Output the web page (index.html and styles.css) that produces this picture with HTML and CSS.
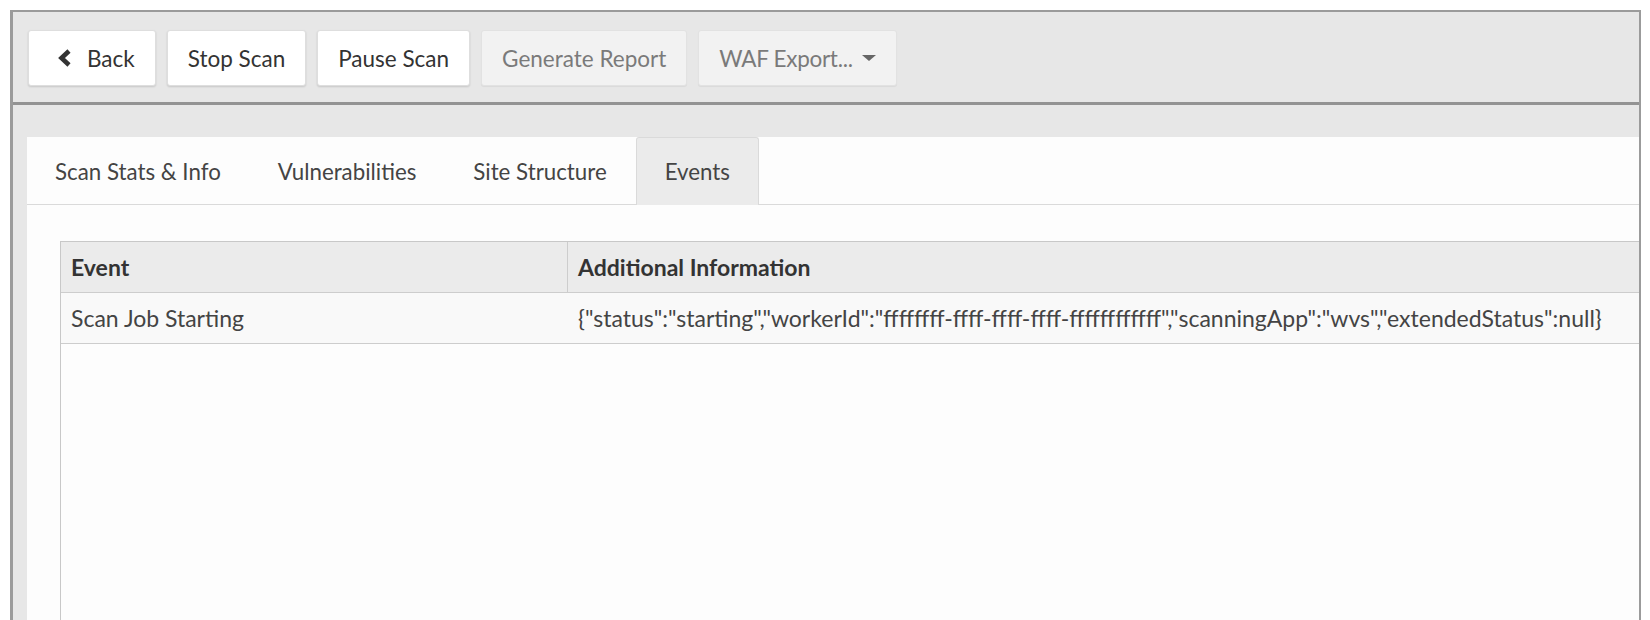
FILE: index.html
```html
<!DOCTYPE html>
<html>
<head>
<meta charset="utf-8">
<title>Scan Events</title>
<link rel="stylesheet" href="styles.css">
</head>
<body>
<div class="frame">
  <div class="toolbar">
    <button class="btn"><svg class="chev" width="15" height="18" viewBox="0 0 15 18"><polyline points="12,2 4.5,9 12,16" fill="none" stroke="#333" stroke-width="4.6" stroke-linejoin="miter"/></svg>Back</button>
    <button class="btn">Stop Scan</button>
    <button class="btn">Pause Scan</button>
    <button class="btn disabled">Generate Report</button>
    <button class="btn disabled"><span class="waf">WAF Export...</span><span class="caret"></span></button>
  </div>
  <div class="workspace">
    <div class="panel">
      <div class="tabs">
        <div class="tab">Scan Stats &amp; Info</div>
        <div class="tab">Vulnerabilities</div>
        <div class="tab">Site Structure</div>
        <div class="tab active">Events</div>
      </div>
      <div class="panel-body">
        <div class="grid">
          <div class="row head">
            <div class="cell first">Event</div>
            <div class="cell">Additional Information</div>
          </div>
          <div class="row data">
            <div class="cell">Scan Job Starting</div>
            <div class="cell">{"status":"starting","workerId":"ffffffff-ffff-ffff-ffff-ffffffffffff","scanningApp":"wvs","extendedStatus":null}</div>
          </div>
        </div>
      </div>
    </div>
  </div>
</div>
</body>
</html>
```

FILE: styles.css
```css
html, body {
  margin: 0;
  padding: 0;
  background: #ffffff;
  overflow: hidden;
}

body {
  font-family: Lato, "Liberation Sans", sans-serif;
  color: #333;
}

.frame {
  margin: 10px 0 0 10px;
  width: 1626px;
  height: 640px;
  border-top: 2px solid #9b9b9b;
  border-left: 3px solid #9b9b9b;
  border-right: 2px solid #9b9b9b;
  background: #e7e7e7;
  overflow: hidden;
  display: flex;
  flex-direction: column;
}

.toolbar {
  height: 93px;
  flex: none;
  box-sizing: border-box;
  padding: 18px 0 0 15px;
  border-bottom: 3px solid #939393;
  display: flex;
  align-items: flex-start;
  gap: 11px;
  background: #e7e7e7;
}

.btn {
  height: 56px;
  box-sizing: border-box;
  padding: 0 20px;
  display: flex;
  align-items: center;
  background: #ffffff;
  border: 1px solid #dedede;
  border-radius: 3px;
  box-shadow: 0 1px 2px rgba(0, 0, 0, 0.14);
  font-family: Lato, "Liberation Sans", sans-serif;
  font-size: 22.5px;
  color: #333;
  white-space: nowrap;
}

.btn.disabled {
  background: #f2f2f2;
  color: #7a7a7a;
  box-shadow: 0 1px 1px rgba(0, 0, 0, 0.06);
  border-color: #e2e2e2;
}

.waf {
  letter-spacing: -0.3px;
}

.chev {
  margin-right: 15px;
  margin-left: 8px;
}

.caret {
  display: inline-block;
  width: 0;
  height: 0;
  margin-left: 9px;
  border-top: 6px solid #666;
  border-left: 7px solid transparent;
  border-right: 7px solid transparent;
}

.workspace {
  flex: 1;
  padding: 32px 0 0 14px;
  display: flex;
}

.panel {
  flex: 1;
  background: #fdfdfd;
  display: flex;
  flex-direction: column;
}

.tabs {
  display: flex;
  height: 68px;
  flex: none;
  box-sizing: border-box;
  border-bottom: 1px solid #dadada;
}

.tab {
  padding: 0 28px 0 27px;
  display: flex;
  align-items: center;
  font-size: 22.3px;
  color: #444;
  box-sizing: border-box;
  border: 1px solid transparent;
  border-bottom: none;
}

.tab.active {
  background: #ebebeb;
  border-color: #dadada;
  border-radius: 3px 3px 0 0;
  height: 68px;
  padding: 0 28px;
}

.panel-body {
  flex: 1;
  padding: 36px 0 0 33px;
  display: flex;
}

.grid {
  flex: 1;
  border-left: 1px solid #c8c8c8;
  border-top: 1px solid #c8c8c8;
  background: #fdfdfd;
}

.row {
  display: grid;
  grid-template-columns: 507px 1fr;
  height: 51px;
  box-sizing: border-box;
  border-bottom: 1px solid #cdcdcd;
}

.row.head {
  background: #ebebeb;
  font-weight: bold;
  color: #333;
}

.row.data {
  background: #f9f9f9;
  color: #444;
}

.cell {
  display: flex;
  align-items: center;
  padding: 0 10px;
  font-size: 23px;
  white-space: nowrap;
}

.cell.first {
  border-right: 1px solid #cdcdcd;
}
```
